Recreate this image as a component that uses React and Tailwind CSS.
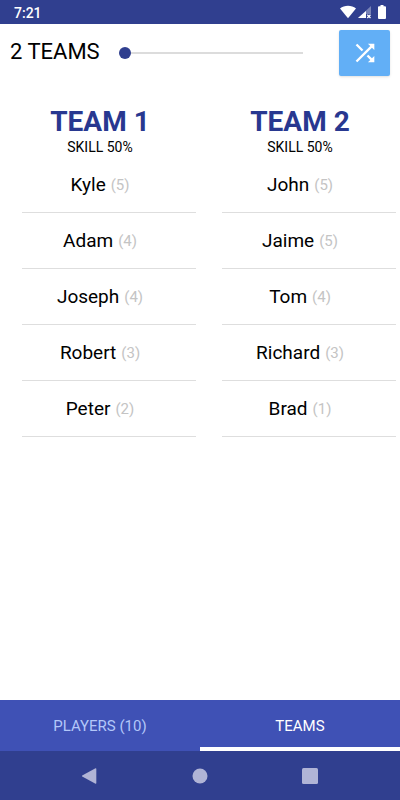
import { useState } from 'react';

const teams = [
    {
        name: 'TEAM 1',
        skill: 50,
        players: [
            { name: 'Kyle', skill: 5 },
            { name: 'Adam', skill: 4 },
            { name: 'Joseph', skill: 4 },
            { name: 'Robert', skill: 3 },
            { name: 'Peter', skill: 2 },
        ],
    },
    {
        name: 'TEAM 2',
        skill: 50,
        players: [
            { name: 'John', skill: 5 },
            { name: 'Jaime', skill: 5 },
            { name: 'Tom', skill: 4 },
            { name: 'Richard', skill: 3 },
            { name: 'Brad', skill: 1 },
        ],
    },
];

function StatusBar() {
    return (
        <div className="flex h-6 items-center justify-between bg-[#303f8f] px-[14px] text-white">
            <span className="pt-[2px] text-[14px] font-medium leading-6">7:21</span>
            <div className="flex items-center">
                {/* wifi */}
                <svg width="16" height="14" viewBox="0 0 16 14" className="mr-[2px]" fill="currentColor">
                    <path d="M0 3.4C2.2 1.7 5 .7 8 .7s5.8 1 8 2.7L8 13.3z" />
                </svg>
                {/* mobile signal, no connection */}
                <svg width="14" height="14" viewBox="0 0 14 14" className="mr-[6px]" fill="currentColor">
                    <path d="M13 1v8H8v4H0z" opacity="0.35" />
                    <path d="M8 6v7H0z" />
                    <path d="M9.3 9.8l3.2 3.2M12.5 9.8l-3.2 3.2" stroke="currentColor" strokeWidth="1.3" />
                </svg>
                {/* battery */}
                <svg width="8" height="14" viewBox="0 0 8 14" fill="currentColor">
                    <path d="M2.5 0h3v1.3H7a1 1 0 0 1 1 1V13a1 1 0 0 1-1 1H1a1 1 0 0 1-1-1V2.3a1 1 0 0 1 1-1h1.5z" />
                </svg>
            </div>
        </div>
    );
}

function TeamColumn({ team }) {
    return (
        <section className="flex-1">
            <h2 className="text-center text-[28px] font-bold leading-8 text-[#283890]">{team.name}</h2>
            <p className="text-center text-[14px] leading-[19px]">SKILL {team.skill}%</p>
            <ul className="ml-[22px] mr-1">
                {team.players.map((player) => (
                    <li
                        key={player.name}
                        className="flex h-14 items-center justify-center border-b border-[#dedede] pr-[18px]"
                    >
                        <span className="text-[19px] leading-6">{player.name}</span>
                        <span className="ml-[5px] text-[15px] leading-6 text-[#c4c4c4]">({player.skill})</span>
                    </li>
                ))}
            </ul>
        </section>
    );
}

function App() {
    const [teamCount, setTeamCount] = useState(2);
    const [tab, setTab] = useState('teams');

    const tabs = [
        { id: 'players', label: 'PLAYERS (10)' },
        { id: 'teams', label: 'TEAMS' },
    ];

    return (
        <div className="flex min-h-screen flex-col bg-white font-['Roboto',sans-serif] text-black">
            <StatusBar />

            <header className="flex items-center px-[10px] py-[6px]">
                <label htmlFor="team-count" className="w-[109px] pb-[2px] text-[22px] leading-6">
                    {teamCount} TEAMS
                </label>
                <input
                    id="team-count"
                    type="range"
                    min="2"
                    max="10"
                    value={teamCount}
                    onChange={(e) => setTeamCount(Number(e.target.value))}
                    className="mr-9 h-3 min-w-0 flex-1 appearance-none bg-transparent [&::-webkit-slider-runnable-track]:h-[2px] [&::-webkit-slider-runnable-track]:bg-[#dcdcdc] [&::-webkit-slider-thumb]:mt-[-5px] [&::-webkit-slider-thumb]:h-3 [&::-webkit-slider-thumb]:w-3 [&::-webkit-slider-thumb]:appearance-none [&::-webkit-slider-thumb]:rounded-full [&::-webkit-slider-thumb]:bg-[#303f8f]"
                />
                <button
                    type="button"
                    aria-label="Shuffle teams"
                    className="flex h-[46px] w-[51px] items-center justify-center rounded-[2px] bg-[#62aff6] text-white shadow-sm"
                >
                    <svg width="28" height="28" viewBox="0 0 24 24" fill="currentColor">
                        <path d="M10.59 9.17L5.41 4 4 5.41l5.17 5.17 1.42-1.41zM14.5 4l2.04 2.04L4 18.59 5.41 20 17.96 7.46 20 9.5V4h-5.5zm.33 9.41l-1.41 1.41 3.13 3.13L14.5 20H20v-5.5l-2.04 2.04-3.13-3.13z" />
                    </svg>
                </button>
            </header>

            <main className="flex flex-1 pt-6">
                {teams.map((team) => (
                    <TeamColumn key={team.name} team={team} />
                ))}
            </main>

            <nav className="flex h-[51px] bg-[#3f51b5]">
                {tabs.map(({ id, label }) => (
                    <button
                        key={id}
                        type="button"
                        onClick={() => setTab(id)}
                        className={`flex-1 border-b-4 pt-[6px] text-[15px] ${
                            tab === id ? 'border-white text-white' : 'border-transparent text-[#b3c7f9]'
                        }`}
                    >
                        {label}
                    </button>
                ))}
            </nav>

            <div className="flex h-[49px] items-center justify-center gap-[94px] bg-[#303f8f] text-[#b0b4d6]">
                <button type="button" aria-label="Back">
                    <svg width="16" height="16" viewBox="0 0 16 16" fill="currentColor">
                        <path d="M13.500 .3Q14.300 0 14.300 1v14q0 1-.8.7L.2 8.500Q-.3 8 .2 7.500z" />
                    </svg>
                </button>
                <button type="button" aria-label="Home">
                    <svg width="16" height="16" viewBox="0 0 16 16" fill="currentColor">
                        <circle cx="8" cy="8" r="7.5" />
                    </svg>
                </button>
                <button type="button" aria-label="Recent apps">
                    <svg width="16" height="16" viewBox="0 0 16 16" fill="currentColor">
                        <rect width="16" height="16" rx="1.5" />
                    </svg>
                </button>
            </div>
        </div>
    );
}

export default App;
